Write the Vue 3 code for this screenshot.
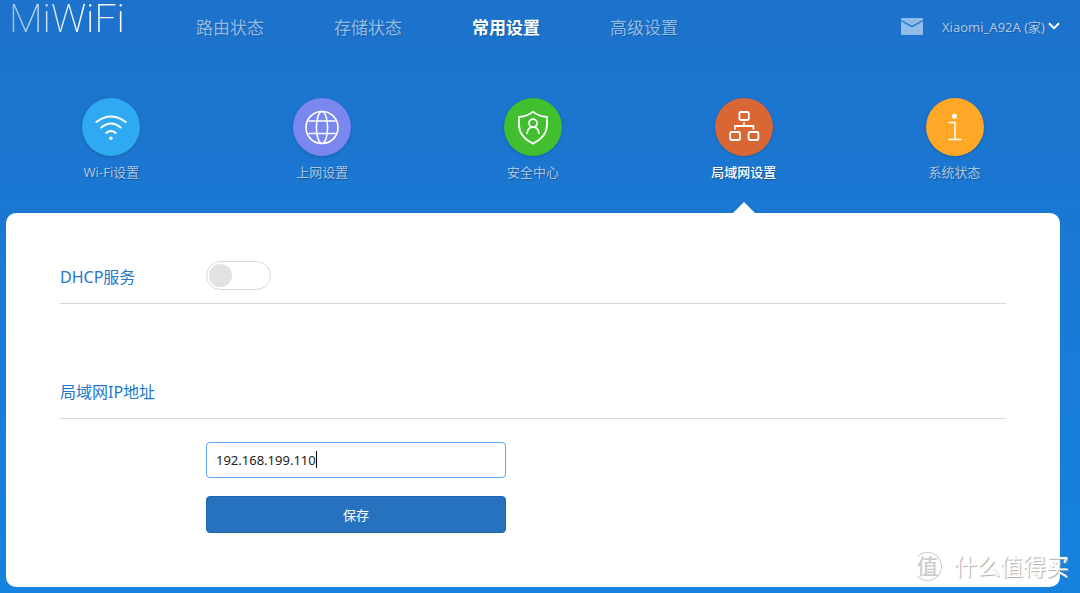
<script setup>
import { ref } from 'vue'

const mainNav = ['路由状态', '存储状态', '常用设置', '高级设置']
const activeMain = ref(2)

const subNav = [
  { label: 'Wi-Fi设置', icon: 'wifi' },
  { label: '上网设置', icon: 'globe' },
  { label: '安全中心', icon: 'shield' },
  { label: '局域网设置', icon: 'lan' },
  { label: '系统状态', icon: 'info' },
]
const activeSub = ref(3)

const dhcp = ref(false)
const ip = ref('192.168.199.110')
</script>

<template>
  <div class="page">
    <header class="topbar">
      <a class="logo" href="#">MiWiFi</a>
      <nav class="main-nav">
        <a
          v-for="(item, i) in mainNav"
          :key="item"
          href="#"
          :class="{ active: i === activeMain }"
          @click.prevent="activeMain = i"
        >{{ item }}</a>
      </nav>
      <div class="account">
        <a class="mail" href="#" aria-label="消息">
          <svg width="22" height="17" viewBox="0 0 22 17">
            <rect width="22" height="17" rx="1" fill="#8fbce8" />
            <path d="M0 2.5L11 8.5L22 2.5" fill="none" stroke="#1d72cb" stroke-width="1.3" />
          </svg>
        </a>
        <button class="router" type="button">
          <span>Xiaomi_A92A (家)</span>
          <svg width="12" height="8" viewBox="0 0 12 8">
            <path d="M1 1.2L6 6.2L11 1.2" fill="none" stroke="#fff" stroke-width="2" />
          </svg>
        </button>
      </div>
    </header>

    <nav class="sub-nav">
      <a
        v-for="(item, i) in subNav"
        :key="item.icon"
        href="#"
        :class="{ active: i === activeSub }"
        @click.prevent="activeSub = i"
      >
        <span class="disc" :class="item.icon">
          <svg width="58" height="58" viewBox="0 0 58 58" fill="none" stroke="#fff" stroke-width="1.6">
            <g v-if="item.icon === 'wifi'" stroke-linecap="round" stroke-width="1.9">
              <path d="M14.3 24Q29 13 43.7 24" />
              <path d="M19.2 29.6Q29 21.4 38.8 29.6" />
              <path d="M24.2 35Q29 31 33.8 35" />
              <circle cx="29" cy="40.2" r="1.7" fill="#fff" stroke="none" />
            </g>
            <g v-else-if="item.icon === 'globe'">
              <circle cx="29" cy="29.5" r="16" />
              <ellipse cx="29" cy="29.5" rx="5.6" ry="16" />
              <path d="M15.5 23H42.5M15.5 35.5H42.5" />
            </g>
            <g v-else-if="item.icon === 'shield'" stroke-linejoin="round" stroke-width="1.8">
              <path d="M29 13.6Q24 18.2 15 19V27.5Q15.5 39 29 45.6Q42.5 39 43 27.5V19Q34 18.2 29 13.6Z" />
              <circle cx="29" cy="25.2" r="4" />
              <path d="M23.2 36V35Q23.6 29.2 29 29.2Q34.4 29.2 34.8 35V36" />
            </g>
            <g v-else-if="item.icon === 'lan'" stroke-width="1.8">
              <rect x="24.4" y="14" width="9.4" height="8" rx="1.5" />
              <rect x="15.2" y="34" width="9.8" height="8" rx="1.5" />
              <rect x="33.6" y="34" width="9.8" height="8" rx="1.5" />
              <path d="M29 24.4V28M20 31.4V28H38.4V31.4" />
            </g>
            <g v-else>
              <circle cx="28.5" cy="18.2" r="2.5" fill="#fff" stroke="none" />
              <path d="M22.5 24.5H29V41M22.5 41.5H35.5" />
            </g>
          </svg>
        </span>
        <span class="label">{{ item.label }}</span>
      </a>
    </nav>

    <main class="panel">
      <section>
        <div class="heading">
          <label for="dhcp">DHCP服务</label>
          <input id="dhcp" v-model="dhcp" class="switch" type="checkbox" role="switch" />
        </div>
      </section>

      <section>
        <div class="heading">
          <label for="lan-ip">局域网IP地址</label>
        </div>
        <form class="form" @submit.prevent>
          <div class="field">
            <input id="lan-ip" v-model="ip" type="text" autocomplete="off" />
            <span class="caret"></span>
          </div>
          <button class="save" type="submit">保存</button>
        </form>
      </section>
    </main>

    <div class="watermark">
      <span class="seal">值</span>
      <span>什么值得买</span>
    </div>
  </div>
</template>

<style>
body {
  margin: 0;
  background: #1582e0;
}
</style>

<style scoped>
.page {
  position: relative;
  box-sizing: border-box;
  min-height: 100vh;
  padding: 0 20px 6px 6px;
  background: linear-gradient(#1d72cb, #1582e0);
  font-family: "Noto Sans", "Noto Sans CJK SC", sans-serif;
  font-size: 13px;
}

a {
  color: inherit;
  text-decoration: none;
}

button,
input {
  font: inherit;
}

.topbar {
  display: flex;
  align-items: center;
  height: 52px;
  color: #8fbce8;
  text-shadow: 1px 1px 1px rgba(0, 0, 0, 0.2);
}

.logo {
  width: 155px;
  height: 52px;
  box-sizing: border-box;
  padding-left: 3px;
  font: 200 39px/39px Roboto, sans-serif;
  text-shadow: none;
  color: transparent;
  background: linear-gradient(90deg, #8fbce8, #fff 80px);
  background-clip: text;
}

.main-nav {
  display: flex;
  font-size: 17px;
}

.main-nav a {
  width: 138px;
  text-align: center;
}

.main-nav .active {
  color: #fff;
  font-weight: 700;
}

.account {
  display: flex;
  align-items: center;
  gap: 19px;
  margin-left: auto;
}

.mail svg {
  display: block;
}

.router {
  display: flex;
  align-items: center;
  gap: 3px;
  padding: 0;
  border: 0;
  background: none;
  color: #a9c6e6;
  text-shadow: inherit;
}

.sub-nav {
  display: grid;
  grid-template-columns: repeat(5, 1fr);
  padding-top: 46px;
  color: #a9c6e6;
  text-shadow: 1px 1px 1px rgba(0, 0, 0, 0.3);
}

.sub-nav a {
  position: relative;
  display: flex;
  flex-direction: column;
  align-items: center;
  gap: 6px;
  height: 115px;
  line-height: 20px;
}

.sub-nav .active {
  color: #fff;
  font-weight: 500;
}

.sub-nav .active::after {
  content: "";
  position: absolute;
  bottom: 0;
  border: 11px solid transparent;
  border-top: 0;
  border-bottom-color: #fff;
}

.disc {
  width: 58px;
  height: 58px;
  border-radius: 50%;
  box-shadow: 0 1px 3px rgba(0, 0, 0, 0.2);
}

.disc svg {
  display: block;
}

.wifi { background: #2fa9f1; }
.globe { background: #7a87ef; }
.shield { background: #41bf2f; }
.lan { background: #d96635; }
.info { background: #ffa726; }

.panel {
  padding: 48px 54px 54px;
  border-radius: 10px;
  background: #fff;
}

section + section {
  margin-top: 72px;
}

.heading {
  display: grid;
  grid-template-columns: 146px 1fr;
  align-items: center;
  height: 29px;
  padding-bottom: 13px;
  border-bottom: 1px solid #d9d9d9;
  color: #2277cc;
  font-size: 16px;
}

.switch {
  appearance: none;
  box-sizing: border-box;
  width: 65px;
  height: 29px;
  margin: 0;
  padding: 2px;
  border: 1px solid #d9d9d9;
  border-radius: 15px;
  background: #fff;
}

.switch::before {
  content: "";
  display: block;
  width: 23px;
  height: 23px;
  border-radius: 50%;
  background: #e2e2e2;
}

.switch:checked::before {
  margin-left: auto;
  background: #2672bf;
}

.form {
  display: flex;
  flex-direction: column;
  gap: 18px;
  max-width: 300px;
  margin: 23px 0 0 146px;
}

.field {
  position: relative;
}

.field input {
  display: block;
  box-sizing: border-box;
  width: 100%;
  height: 36px;
  padding: 0 9px;
  border: 1px solid #5aa5f5;
  border-radius: 4px;
  outline: 0;
  color: #222;
  background: #fff;
}

.caret {
  position: absolute;
  top: 9px;
  left: 110px;
  width: 1px;
  height: 17px;
  background: #000;
}

.save {
  height: 37px;
  padding: 0;
  border: 1px solid #1b62b0;
  border-radius: 4px;
  background: #2672bf;
  color: #fff;
}

.watermark {
  position: absolute;
  right: 11px;
  bottom: 9px;
  display: flex;
  align-items: center;
  gap: 12px;
  color: #fff;
  font-size: 23px;
  line-height: 36px;
  text-shadow: 1px 1px 1px #aaa;
  pointer-events: none;
}

.seal {
  width: 27px;
  height: 27px;
  border: 1px solid #ccc;
  border-left-color: transparent;
  border-radius: 50%;
  color: #ccc;
  font-size: 21px;
  font-weight: 500;
  line-height: 27px;
  text-align: center;
  text-shadow: none;
}
</style>
